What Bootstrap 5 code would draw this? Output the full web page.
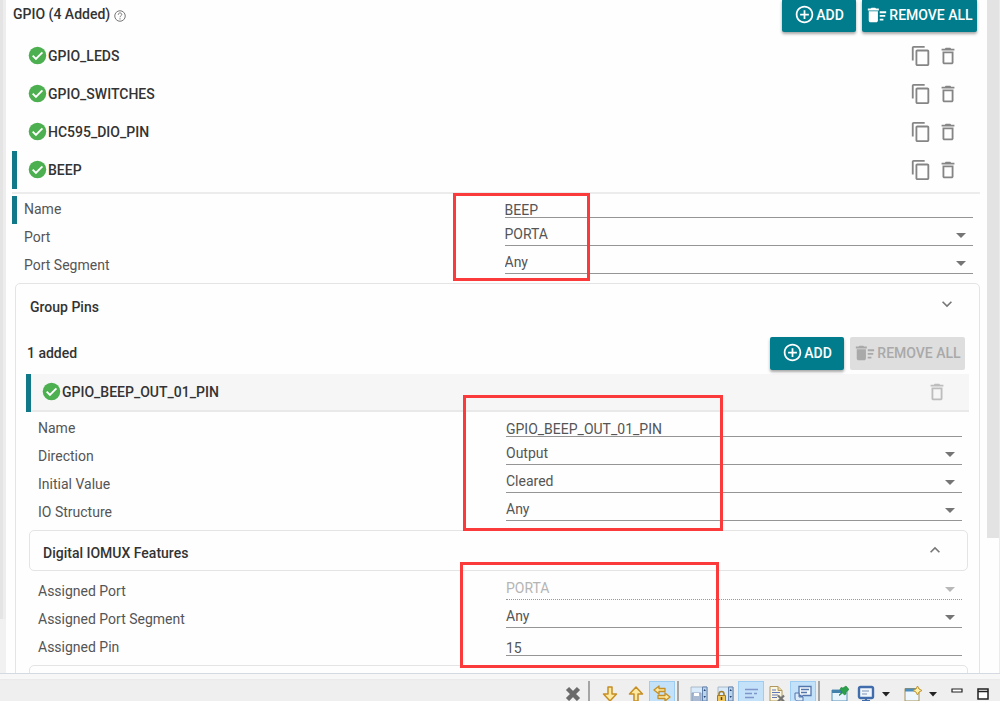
<!DOCTYPE html>
<html lang="en">
<head>
<meta charset="utf-8">
<meta name="viewport" content="width=device-width, initial-scale=1">
<title>GPIO configuration</title>
<link href="https://cdn.jsdelivr.net/npm/bootstrap@5.3.0/dist/css/bootstrap.min.css" rel="stylesheet">
<style>
  :root { --teal: #007c8c; --bar: #117889; --line: #e9e9e9; --ink: #333; --soft: #555; }
  body { font-family: Roboto, "Liberation Sans", sans-serif; font-size: 14px; line-height: 20px; color: var(--ink); background: #fefefe; }
  .workspace { min-height: 0; }
  .rail-left { width: 6px; background: #f1f1f1; }
  .rail-left div { height: 92%; background: linear-gradient(90deg, #e4e4e4 3px, #ededed 3px); }
  .rail-right { width: 13px; border-right: 1px solid #ebebeb; }
  .rail-right div { height: 80%; background: #e3e3e3; }
  .panel { padding: 0 7px 0 6px; margin-top: -1px; }
  svg { display: block; flex: none; }
  .title { font-weight: 500; }
  .head-top { padding: 0 3px 0 1px; margin-bottom: 5px; }
  .actions { gap: 6px; }
  .action { height: 33px; border: 0; border-radius: 2px; padding: 0 0 2px; font-size: 14px; font-weight: 500; color: #fff; background: var(--teal);
    display: flex; align-items: center; justify-content: center; gap: 1px; box-shadow: 0 2px 3px rgba(0,0,0,.35); white-space: nowrap; }
  .action.add { width: 74px; }
  .action.remove { width: 115px; }
  .action:disabled { background: #dedede; color: #a9a9a9; box-shadow: none; }
  .item { height: 38px; border-left: 5px solid transparent; padding: 0 20px 1px 10px; font-weight: 500; }
  .item.selected { border-left-color: var(--bar); }
  .item.shaded { background: #f6f6f6; box-shadow: inset 0 -2px #e9e9e9; padding-bottom: 3px; margin-bottom: 3px; }
  .item .tools { gap: 3px; color: #858585; }
  .tool { width: 24px; height: 24px; padding: 1px; border: 0; background: none; color: inherit; }
  .tool:disabled { color: #bdbdbd; }
  .rule { border-top: 2px solid #ececec; margin: 3px 0 2px; }
  .field { height: 28px; display: grid; grid-template-columns: 1fr 1fr; column-gap: 12px; border-left: 5px solid transparent; padding: 0 7px; color: var(--soft); }
  .field.selected { border-left-color: var(--bar); }
  .field label { line-height: 26px; }
  .line { width: 100%; height: 22px; border: 0; border-bottom: 1px solid #959595; border-radius: 0; padding: 0; background: transparent; color: var(--soft); outline: 0; }
  input.line { padding-top: 7px; }
  select.line { appearance: none; padding-bottom: 1px;
    background: url("data:image/svg+xml,%3Csvg xmlns='http://www.w3.org/2000/svg' width='10' height='5'%3E%3Cpath fill='%23757575' d='M0 0h10L5 5z'/%3E%3C/svg%3E") no-repeat right 7px top 9px; }
  select.line:disabled { opacity: 1; color: #b5b5b5; border-bottom: 1px dotted #999;
    background-image: url("data:image/svg+xml,%3Csvg xmlns='http://www.w3.org/2000/svg' width='10' height='5'%3E%3Cpath fill='%23b8b8b8' d='M0 0h10L5 5z'/%3E%3C/svg%3E"); }
  .box { border: 1px solid #e4e4e4; border-radius: 5px; }
  .box-outer { margin: 3px 0 0 3px; padding: 0 10px; }
  .fold { color: #777; }
  .fold .title { color: var(--ink); }
  .fold-outer { height: 46px; margin-bottom: 7px; padding: 0 12px 0 4px; }
  .fold-outer svg { margin-bottom: 6px; }
  .box-inner { height: 41px; margin: 3px 1px 7px 3px; padding: 4px 22px 0 13px; }
  .box-inner svg { margin-bottom: 5px; }
  .head-inner { padding: 0 4px 0 1px; margin-bottom: 4px; }
  .head-inner .title { padding-bottom: 2px; }
  .callout { position: absolute; border: 3px solid #fb3b3b; pointer-events: none; }
  .callout.c1 { left: calc(50% - 43px); top: -3px; width: 137px; height: 88px; }
  .callout.c2 { left: calc(50% - 35px); top: -20px; width: 260px; height: 136px; }
  .callout.c3 { left: calc(50% - 38px); top: -16px; width: 259px; height: 106px; }
  .toolstrip { height: 28px; border-top: 1px solid #d5dae2; background: linear-gradient(#f7f7f7 5px, #e8e8e8 5px, #efefef 7px); padding: 7px 4px 0 0; overflow: hidden; }
  .tb { width: 26px; height: 26px; border: 1px solid transparent; padding: 3px; background: none; }
  .tb.on { background: #c3e1f8; border-color: #9dcdf2; }
  .tb.menu { width: 14px; padding: 3px 1px; }
  .bar { width: 2px; height: 26px; background: #a5a5a5; margin: 0 7px 0 2px; }
  .menu-gap { width: 7px; }
</style>
</head>
<body class="d-flex flex-column vh-100 overflow-hidden">
<svg width="0" height="0" class="position-absolute" aria-hidden="true">
  <symbol id="ok" viewBox="0 0 24 24"><circle cx="12" cy="12" r="10" fill="#4caf50"/><path d="M6.5 12.2l3.7 3.7 7.4-7.5" fill="none" stroke="#fff" stroke-width="2.2"/></symbol>
  <symbol id="copy" viewBox="0 0 24 24"><path fill="currentColor" d="M16 1H4c-1.1 0-2 .9-2 2v14h2V3h12V1zm3 4H8c-1.1 0-2 .9-2 2v14c0 1.1.9 2 2 2h11c1.1 0 2-.9 2-2V7c0-1.1-.9-2-2-2zm0 16H8V7h11v14z"/></symbol>
  <symbol id="trash" viewBox="0 0 24 24"><path fill="currentColor" d="M6 19c0 1.1.9 2 2 2h8c1.1 0 2-.9 2-2V7H6v12zM8 9h8v10H8V9zm7.5-5l-1-1h-5l-1 1H5v2h14V4z"/></symbol>
  <symbol id="plus" viewBox="0 0 24 24"><path fill="currentColor" d="M13 7h-2v4H7v2h4v4h2v-4h4v-2h-4V7zm-1-5C6.48 2 2 6.48 2 12s4.480 10 10 10 10-4.480 10-10S17.520 2 12 2zm0 18c-4.410 0-8-3.590-8-8s3.590-8 8-8 8 3.590 8 8-3.590 8-8 8z"/></symbol>
  <symbol id="sweep" viewBox="0 0 24 24"><path fill="currentColor" d="M15 16h4v2h-4zm0-8h7v2h-7zm0 4h6v2h-6zM3 18c0 1.100.9 2 2 2h6c1.100 0 2-.9 2-2V8H3v10zM14 5h-3l-1-1H6L5 5H2v2h12V5z"/></symbol>
</svg>

<main class="workspace d-flex flex-grow-1 overflow-hidden">
  <div class="rail-left flex-shrink-0"><div></div></div>
  <div class="panel flex-grow-1">
    <header class="head-top d-flex align-items-center justify-content-between">
      <div class="d-flex align-items-center title pb-1">GPIO (4 Added)
        <svg class="ms-1 mt-1" width="12" height="12" viewBox="0 0 24 24" fill="none" stroke="#777" stroke-width="2"><circle cx="12" cy="12" r="10.500"/><path d="M8.500 9.500c0-5 7-4.500 7-.5 0 2.500-3.500 2.700-3.500 5.500M12 16.500v2.500"/></svg>
      </div>
      <div class="actions d-flex">
        <button class="action add"><svg width="21" height="21"><use href="#plus"/></svg>ADD</button>
        <button class="action remove"><svg width="22" height="22"><use href="#sweep"/></svg>REMOVE ALL</button>
      </div>
    </header>

    <div class="item d-flex align-items-center"><svg width="21" height="21"><use href="#ok"/></svg><span>GPIO_LEDS</span>
      <div class="tools d-flex ms-auto"><button class="tool" aria-label="Copy"><svg width="22" height="22"><use href="#copy"/></svg></button><button class="tool" aria-label="Delete"><svg width="22" height="22"><use href="#trash"/></svg></button></div></div>
    <div class="item d-flex align-items-center"><svg width="21" height="21"><use href="#ok"/></svg><span>GPIO_SWITCHES</span>
      <div class="tools d-flex ms-auto"><button class="tool" aria-label="Copy"><svg width="22" height="22"><use href="#copy"/></svg></button><button class="tool" aria-label="Delete"><svg width="22" height="22"><use href="#trash"/></svg></button></div></div>
    <div class="item d-flex align-items-center"><svg width="21" height="21"><use href="#ok"/></svg><span>HC595_DIO_PIN</span>
      <div class="tools d-flex ms-auto"><button class="tool" aria-label="Copy"><svg width="22" height="22"><use href="#copy"/></svg></button><button class="tool" aria-label="Delete"><svg width="22" height="22"><use href="#trash"/></svg></button></div></div>
    <div class="item selected d-flex align-items-center"><svg width="21" height="21"><use href="#ok"/></svg><span>BEEP</span>
      <div class="tools d-flex ms-auto"><button class="tool" aria-label="Copy"><svg width="22" height="22"><use href="#copy"/></svg></button><button class="tool" aria-label="Delete"><svg width="22" height="22"><use href="#trash"/></svg></button></div></div>

    <div class="rule"></div>

    <div class="position-relative">
      <div class="field selected"><label for="name">Name</label><input class="line" id="name" value="BEEP"></div>
      <div class="field"><label for="port">Port</label><select class="line" id="port"><option>PORTA</option><option>PORTB</option></select></div>
      <div class="field"><label for="seg">Port Segment</label><select class="line" id="seg"><option>Any</option></select></div>
      <div class="callout c1"></div>
    </div>

    <section class="box box-outer">
      <div class="fold fold-outer d-flex align-items-center justify-content-between"><span class="title">Group Pins</span>
        <svg width="20" height="20" viewBox="0 0 24 24"><path fill="currentColor" d="M16.590 8.590L12 13.170 7.410 8.590 6 10l6 6 6-6z"/></svg></div>
      <div class="head-inner d-flex align-items-center justify-content-between">
        <span class="title">1 added</span>
        <div class="actions d-flex">
          <button class="action add"><svg width="21" height="21"><use href="#plus"/></svg>ADD</button>
          <button class="action remove" disabled><svg width="22" height="22"><use href="#sweep"/></svg>REMOVE ALL</button>
        </div>
      </div>
      <div class="item selected shaded d-flex align-items-center"><svg width="21" height="21"><use href="#ok"/></svg><span>GPIO_BEEP_OUT_01_PIN</span>
        <div class="tools d-flex ms-auto"><button class="tool" aria-label="Delete" disabled><svg width="22" height="22"><use href="#trash"/></svg></button></div></div>

      <div class="position-relative">
        <div class="field"><label for="pname">Name</label><input class="line" id="pname" value="GPIO_BEEP_OUT_01_PIN"></div>
        <div class="field"><label for="dir">Direction</label><select class="line" id="dir"><option>Output</option><option>Input</option></select></div>
        <div class="field"><label for="init">Initial Value</label><select class="line" id="init"><option>Cleared</option><option>Set</option></select></div>
        <div class="field"><label for="io">IO Structure</label><select class="line" id="io"><option>Any</option></select></div>
        <div class="callout c2"></div>
      </div>

      <div class="box box-inner fold d-flex align-items-center justify-content-between"><span class="title">Digital IOMUX Features</span>
        <svg width="20" height="20" viewBox="0 0 24 24"><path fill="currentColor" d="M12 8l-6 6 1.410 1.410L12 10.830l4.590 4.580L18 14z"/></svg></div>

      <div class="position-relative">
        <div class="field"><label for="aport">Assigned Port</label><select class="line" id="aport" disabled><option>PORTA</option></select></div>
        <div class="field"><label for="aseg">Assigned Port Segment</label><select class="line" id="aseg"><option>Any</option></select></div>
        <div class="field"><label for="apin">Assigned Pin</label><input class="line" id="apin" value="15"></div>
        <div class="callout c3"></div>
      </div>
      <div class="box box-inner"></div>
    </section>
  </div>
  <div class="rail-right flex-shrink-0"><div></div></div>
</main>

<footer class="toolstrip d-flex justify-content-end flex-shrink-0">
  <button class="tb" aria-label="Remove"><svg width="18" height="18" viewBox="0 0 18 18"><path d="M3.500 3.500l11 11M14.500 3.500l-11 11" stroke="#6b6b6b" stroke-width="4.500"/></svg></button>
  <span class="bar"></span>
  <button class="tb" aria-label="Next"><svg width="18" height="18" viewBox="0 0 18 18"><path d="M7 2h4v7h4.500L9 16 2.500 9H7z" fill="#fde9a0" stroke="#c58f26" stroke-width="1.500" stroke-linejoin="round"/></svg></button>
  <button class="tb" aria-label="Previous"><svg width="18" height="18" viewBox="0 0 18 18"><path d="M7 16h4V9h4.500L9 2 2.500 9H7z" fill="#fde9a0" stroke="#c58f26" stroke-width="1.500" stroke-linejoin="round"/></svg></button>
  <button class="tb on" aria-label="Link"><svg width="18" height="18" viewBox="0 0 18 18"><path d="M1 5l5-4v2.500h6v3H6V9zM17 12l-5-4v2.500H5v3h7V16z" fill="#fde9a0" stroke="#c58f26" stroke-width="1.300" stroke-linejoin="round"/></svg></button>
  <span class="bar"></span>
  <button class="tb" aria-label="Save console"><svg width="18" height="18" viewBox="0 0 18 18"><path d="M1 2h16v14H1z" fill="#d9eafa" stroke="#a9b8c9"/><path d="M12.500 2v14H17V2z" fill="#bcd3ec" stroke="#6484ae"/><path d="M13.500 6l1.200-2 1.200 2zM13.500 11l1.200 2 1.200-2z" fill="#24436e"/><path d="M2 8h9v9H2z" fill="#a9bad2" stroke="#8ea1bd"/><path d="M4 8h5v3H4z" fill="#fff"/></svg></button>
  <button class="tb" aria-label="Scroll lock"><svg width="18" height="18" viewBox="0 0 18 18"><path d="M2 2h15v14H2z" fill="#d9eafa" stroke="#a9b8c9"/><path d="M12.500 2v14H17V2z" fill="#bcd3ec" stroke="#6484ae"/><path d="M13.500 6l1.200-2 1.200 2zM13.500 11l1.200 2 1.200-2z" fill="#24436e"/><path d="M3 11V9c0-3.500 5-3.500 5 0v2" fill="none" stroke="#a37b22" stroke-width="1.500"/><path d="M1.500 10.500h8V17h-8z" fill="#f0c75c" stroke="#a37b22"/><path d="M5.500 12v3" stroke="#5d430f" stroke-width="1.500"/></svg></button>
  <button class="tb on" aria-label="Word wrap"><svg width="18" height="18" viewBox="0 0 18 18"><path d="M3 4.500h13M3 8.500h7M12 8.500h3M3 12.500h9" stroke="#8095c9" stroke-width="1.300"/></svg></button>
  <button class="tb" aria-label="Clear"><svg width="18" height="18" viewBox="0 0 18 18"><path d="M2 1.500h8l4 4V16H2z" fill="#fbf6e2" stroke="#ae985d"/><path d="M10 1.500v4h4" fill="#e6d49c" stroke="#ae985d"/><path d="M4 5h4M4 7.500h8M4 10h6M4 12.500h5" stroke="#6178b5"/><path d="M10 10.500l6 6M16 10.500l-6 6" stroke="#747474" stroke-width="2.200"/></svg></button>
  <button class="tb on" aria-label="Show console"><svg width="18" height="18" viewBox="0 0 18 18"><path d="M5 1.500h12v9H9l-2 3v-3H5z" fill="#f4f9ff" stroke="#5377ad" stroke-width="1.300"/><path d="M7 4.500h8M7 7.500h6" stroke="#5377ad" stroke-width="1.300"/><path d="M1 8h4v4h4v4H4c-2 0-3-1-3-3z" fill="#dcebfa" stroke="#5377ad"/></svg></button>
  <span class="bar"></span>
  <button class="tb" aria-label="Pin console"><svg width="18" height="18" viewBox="0 0 18 18"><path d="M1 5h15v11H1z" fill="#e7f4fd" stroke="#5b90b5"/><path d="M1 5h10v3H1z" fill="#4381ad"/><path d="M10 2.500l2 .5 3-2 3 3.500-3 2.500v2l-1.500 1-2-2-3 2.500-.5-.5 3-3L9 4.500z" fill="#2da04b" stroke="#16803a" stroke-width=".6"/></svg></button>
  <button class="tb" aria-label="Display console"><svg width="18" height="18" viewBox="0 0 18 18"><rect x="2" y="2" width="14" height="11" rx="1.500" fill="#f0f6fc" stroke="#416dac" stroke-width="2.400"/><path d="M5 6h7M5 9h5" stroke="#7c93b7"/><path d="M5 16h8M9 13v3" stroke="#416dac" stroke-width="2.200"/></svg></button>
  <button class="tb menu" aria-label="Console menu"><svg width="10" height="18" viewBox="0 0 10 18"><path d="M1 7h8l-4 4.500z" fill="#222"/></svg></button>
  <span class="menu-gap"></span>
  <button class="tb" aria-label="Open console"><svg width="18" height="18" viewBox="0 0 18 18"><path d="M1 3.500h14V16H1z" fill="#eef7fd" stroke="#a5905b"/><path d="M1 3.500h10v3H1z" fill="#4b8dbb"/><path d="M13.500 1l1.500 3 3 1.500-3 1.500-1.500 3L12 7 9 5.500 12 4z" fill="#fff0ab" stroke="#c19426"/></svg></button>
  <button class="tb menu" aria-label="Open menu"><svg width="10" height="18" viewBox="0 0 10 18"><path d="M1 7h8l-4 4.500z" fill="#222"/></svg></button>
  <span class="ms-1"></span>
  <button class="tb" aria-label="Minimize"><svg width="18" height="18" viewBox="0 0 18 18"><path d="M4 4h10v3H4z" fill="#fff" stroke="#222" stroke-width="1.200"/></svg></button>
  <button class="tb" aria-label="Maximize"><svg width="18" height="18" viewBox="0 0 18 18"><path d="M4 4h10v10H4zM4 6.500h10" fill="#fff" stroke="#222" stroke-width="1.500"/></svg></button>
</footer>
<script src="https://cdn.jsdelivr.net/npm/bootstrap@5.3.0/dist/js/bootstrap.bundle.min.js"></script>
</body>
</html>
